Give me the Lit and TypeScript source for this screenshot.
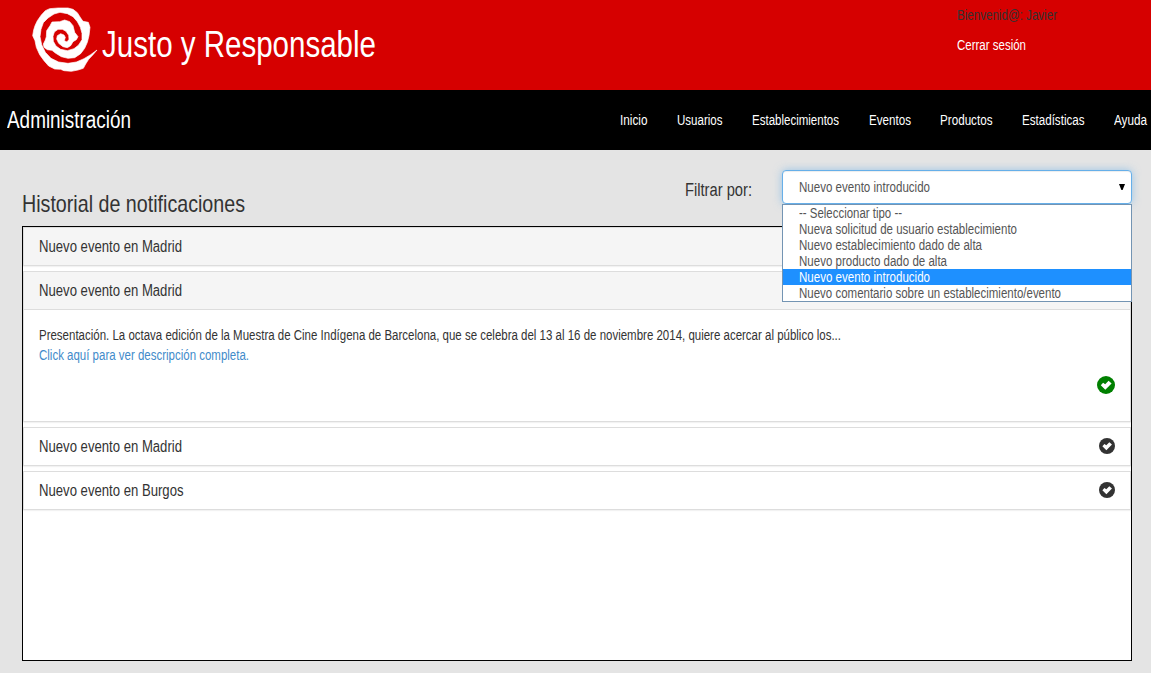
import { LitElement, html, css, svg } from "lit";
import { customElement, property } from "lit/decorators.js";

/** Single line of condensed text, squeezed horizontally to the given width. */
@customElement("narrow-text")
class NarrowText extends LitElement {
  @property({ type: Number }) width = 100;

  static styles = css`
    :host { display: inline-block; white-space: nowrap; vertical-align: top; }
    .line { display: inline-block; transform-origin: 0 50%; }
    .box { display: block; width: 0; }
  `;

  updated() {
    const line = this.renderRoot.querySelector(".line") as HTMLElement;
    this.style.width = `${this.width}px`;
    line.style.transform = `scaleX(${this.width / line.getBoundingClientRect().width})`;
  }

  render() {
    return html`<span class="box"><span class="line"><slot></slot></span></span>`;
  }
}

const NAV: [string, number][] = [
  ["Inicio", 27.5],
  ["Usuarios", 45.5],
  ["Establecimientos", 87],
  ["Eventos", 42],
  ["Productos", 52.5],
  ["Estadísticas", 62.5],
  ["Ayuda", 33],
];

const OPTIONS: [string, number][] = [
  ["-- Seleccionar tipo --", 103],
  ["Nueva solicitud de usuario establecimiento", 218],
  ["Nuevo establecimiento dado de alta", 183],
  ["Nuevo producto dado de alta", 148],
  ["Nuevo evento introducido", 131],
  ["Nuevo comentario sobre un establecimiento/evento", 262],
];

const okIcon = (size: number, color: string) => html`
  <svg width=${size} height=${size} viewBox="0 0 18 18">
    ${svg`<circle cx="9" cy="9" r="9" fill=${color}></circle>
    <path fill="#fff" d="M3.8 9.3 L6.1 6.7 L8.2 8.2 L11.6 4.8 L14.6 7.4 L8.3 13.8 Z"></path>`}
  </svg>`;

@customElement("app-root")
class AppRoot extends LitElement {
  static styles = css`
    :host {
      display: flex; flex-direction: column; height: 673px; overflow: hidden;
      background: #e4e4e4; color: #333;
      font: 14px/20px "Liberation Sans", Arial, sans-serif;
    }
    * { box-sizing: border-box; }
    svg { display: block; flex: none; }
    .banner { display: flex; height: 90px; background: #d60000; padding-left: 28px; flex: none; }
    .logo { margin-top: 4px; }
    .brand { color: #fff; font-size: 36px; line-height: 40px; margin: 25px 0 0 2px; }
    .session { margin-left: auto; width: 194px; padding-top: 5px; display: flex; flex-direction: column; gap: 10px; }
    .logout { color: #fff; }
    .bar { display: flex; align-items: center; height: 60px; flex: none; background: #000; color: #fff; padding: 0 4px 0 7px; }
    .section { font-size: 23px; line-height: 26px; }
    .nav { display: flex; gap: 29.5px; margin-left: auto; }
    .head { display: flex; height: 76px; flex: none; padding: 20px 19px 0 22px; }
    .title { font-size: 24px; line-height: 26px; padding-top: 21px; }
    .filter { font-size: 18px; padding-top: 10px; margin-left: auto; margin-right: 30px; }
    .picker { position: relative; width: 350px; color: #555; }
    .select {
      display: flex; align-items: center; justify-content: space-between; height: 34px;
      padding: 0 6px 0 16px; background: #fff; border: 1px solid #66afe9; border-radius: 4px;
      box-shadow: inset 0 1px 1px rgba(0,0,0,.075), 0 0 8px rgba(102,175,233,.6);
    }
    .menu { position: absolute; left: 0; top: 34px; width: 350px; z-index: 2; background: #fff; border: 1px solid #7394b3; }
    .option { height: 16px; line-height: 16px; padding-left: 16px; }
    .chosen { background: #1e90ff; color: #fff; }
    .list { flex: none; height: 435px; margin: 0 19px 0 22px; background: #fff; border: 1px solid #000; display: flex; flex-direction: column; gap: 5px; }
    .panel { border: 1px solid #ddd; box-shadow: 0 1px 1px rgba(0,0,0,.05); }
    .row { display: flex; align-items: center; justify-content: space-between; height: 37px; padding: 0 15px; font-size: 16px; }
    .row svg { margin-bottom: 2px; }
    .read { background: #f5f5f5; }
    .body { height: 112px; padding: 15px; border-top: 1px solid #ddd; display: flex; flex-direction: column; }
    .link { color: #428bca; }
    .body svg { align-self: flex-end; margin-top: 11px; }
  `;

  render() {
    return html`
      <div class="banner">
        <svg class="logo" width="72" height="72" viewBox="0 0 216 216">
          <path fill="#fff" stroke="#fff" stroke-width="2" stroke-linejoin="round" d="M207 138 L195 152 L182 166 L173 180 L166 193 L150 198 L130 202 L108 200 L98 196 L80 195 L62 186 L48 170 L35 152 L25 130 L21 110 L14 95 L17 78 L21 65 L28 50 L40 33 L52 20 L65 14 L90 12 L120 12 L135 16 L148 26 L158 42 L165 52 L181 55 L186 70 L183 95 L178 115 L170 133 L158 149 L140 161 L120 163 L100 158 L82 147 L72 139 L58 137 L48 130 L46 120 L52 108 L55 98 L56 80 L66 65 L72 54 L95 53 L110 48 L125 53 L135 65 L140 85 L150 98 L145 107 L135 113 L128 125 L118 131 L105 128 L92 118 L86 105 L88 95 L98 89 L108 93 L112 100 L109 110 L117 114 L123 106 L122 94 L114 82 L103 76 L90 76 L79 84 L75 97 L76 112 L84 126 L98 136 L118 140 L138 134 L152 123 L162 107 L162 88 L157 70 L148 53 L135 38 L118 29 L96 25 L78 30 L60 42 L46 56 L39 76 L36 98 L41 122 L52 145 L69 163 L92 174 L120 178 L145 174 L168 164 L188 152 Z"></path>
        </svg>
        <div class="brand"><narrow-text width="274">Justo y Responsable</narrow-text></div>
        <div class="session">
          <narrow-text width="100">Bienvenid@: Javier</narrow-text>
          <narrow-text class="logout" width="69">Cerrar sesión</narrow-text>
        </div>
      </div>
      <div class="bar">
        <narrow-text class="section" width="124">Administración</narrow-text>
        <div class="nav">
          ${NAV.map(([t, w]) => html`<narrow-text width=${w}>${t}</narrow-text>`)}
        </div>
      </div>
      <div class="head">
        <div class="title"><narrow-text width="223">Historial de notificaciones</narrow-text></div>
        <div class="filter"><narrow-text width="67">Filtrar por:</narrow-text></div>
        <div class="picker">
          <div class="select">
            <narrow-text width="131">Nuevo evento introducido</narrow-text>
            <svg width="6" height="6" viewBox="0 0 6 6"><path d="M0 0H6L3.6 6H2.4Z"></path></svg>
          </div>
          <div class="menu">
            ${OPTIONS.map(([t, w], i) => html`
              <div class="option ${i === 4 ? "chosen" : ""}"><narrow-text width=${w}>${t}</narrow-text></div>`)}
          </div>
        </div>
      </div>
      <div class="list">
        <div class="panel"><div class="row read"><narrow-text width="143">Nuevo evento en Madrid</narrow-text></div></div>
        <div class="panel">
          <div class="row read"><narrow-text width="143">Nuevo evento en Madrid</narrow-text></div>
          <div class="body">
            <narrow-text width="802">Presentación. La octava edición de la Muestra de Cine Indígena de Barcelona, que se celebra del 13 al 16 de noviembre 2014, quiere acercar al público los...</narrow-text>
            <narrow-text class="link" width="210">Click aquí para ver descripción completa.</narrow-text>
            ${okIcon(18, "#008000")}
          </div>
        </div>
        <div class="panel"><div class="row"><narrow-text width="143">Nuevo evento en Madrid</narrow-text>${okIcon(16, "#333")}</div></div>
        <div class="panel"><div class="row"><narrow-text width="144.5">Nuevo evento en Burgos</narrow-text>${okIcon(16, "#333")}</div></div>
      </div>
    `;
  }
}
